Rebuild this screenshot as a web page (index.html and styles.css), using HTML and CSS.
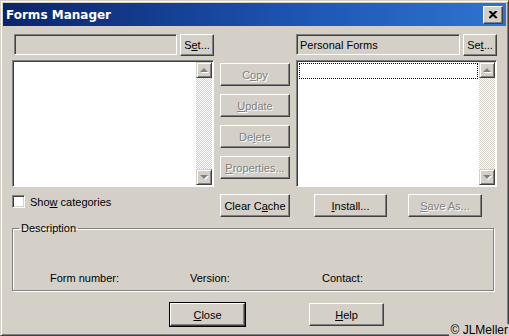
FILE: index.html
```html
<!DOCTYPE html>
<html lang="en">
<head>
    <meta charset="UTF-8">
    <title>Forms Manager</title>
    <link rel="stylesheet" href="styles.css">
</head>
<body>
    <div class="window">
        <div class="titlebar">
            <span class="title">Forms Manager</span>
            <button class="close-btn" aria-label="Close">
                <svg width="9" height="8" viewBox="0 0 9 8">
                    <path d="M1 0 L8 7 M8 0 L1 7 M0 0 L7 7 M7 0 L0 7" stroke="#000" stroke-width="1.4" fill="none"/>
                </svg>
            </button>
        </div>

        <div class="content">
            <div class="panels">
                <!-- left library -->
                <div class="picker picker-left">
                    <div class="field"></div>
                    <button class="btn set-btn">S<u>e</u>t...</button>
                </div>
                <div class="spacer"></div>
                <div class="picker">
                    <div class="field">Personal Forms</div>
                    <button class="btn set-btn">Se<u>t</u>...</button>
                </div>

                <div class="list">
                    <div class="list-body"></div>
                    <div class="scrollbar">
                        <div class="arrow up"></div>
                        <div class="arrow down"></div>
                    </div>
                </div>
                <div class="actions">
                    <button class="btn wide disabled">C<u>o</u>py</button>
                    <button class="btn wide disabled"><u>U</u>pdate</button>
                    <button class="btn wide disabled">De<u>l</u>ete</button>
                    <button class="btn wide disabled"><u>P</u>roperties...</button>
                </div>
                <div class="list">
                    <div class="list-body">
                        <div class="focus-row"></div>
                    </div>
                    <div class="scrollbar">
                        <div class="arrow up"></div>
                        <div class="arrow down"></div>
                    </div>
                </div>

                <label class="check">
                    <span class="box"></span>
                    <span>Sho<u>w</u> categories</span>
                </label>
                <button class="btn wide">Clear C<u>a</u>che</button>
                <div class="right-actions">
                    <button class="btn install-btn"><u>I</u>nstall...</button>
                    <button class="btn save-btn disabled"><u>S</u>ave As...</button>
                </div>
            </div>

            <fieldset class="group">
                <legend>Description</legend>
                <div class="meta">
                    <span class="meta-number">Form number:</span>
                    <span class="meta-version">Version:</span>
                    <span class="meta-contact">Contact:</span>
                </div>
            </fieldset>

            <div class="footer">
                <button class="btn footer-btn default"><u>C</u>lose</button>
                <button class="btn footer-btn"><u>H</u>elp</button>
            </div>
        </div>

        <div class="credit">&copy; JLMeller</div>
    </div>
</body>
</html>
```

FILE: styles.css
```css
body {
    margin: 0;
    background: #d4d0c8;
    font-family: 'Liberation Sans', Arial, sans-serif;
    font-size: 11px;
    color: #000;
    overflow: hidden;
}

.window {
    position: relative;
    width: 509px;
    height: 336px;
    box-sizing: border-box;
    padding: 2px;
    background: #d4d0c8;
    border: 1px solid;
    border-color: #d4d0c8 #404040 #404040 #d4d0c8;
    box-shadow: inset 1px 1px #fff, inset -1px -1px #808080;
}

.titlebar {
    height: 23px;
    display: flex;
    align-items: center;
    justify-content: space-between;
    padding: 0 3px 0 3px;
    background: linear-gradient(to right, #0a246a, #1e56b4 60%, #2f74d0);
}

.title {
    color: #fff;
    font-family: 'DejaVu Sans', sans-serif;
    font-weight: bold;
    font-size: 12px;
}

.close-btn {
    width: 20px;
    height: 18px;
    padding: 0;
    display: flex;
    align-items: center;
    justify-content: center;
    background: #d4d0c8;
    border: 1px solid;
    border-color: #fff #404040 #404040 #fff;
    box-shadow: inset -1px -1px #808080;
}

.content {
    padding: 8px 0 0 9px;
}

.panels {
    display: grid;
    grid-template-columns: 202px 70px 201px;
    column-gap: 6px;
    align-items: start;
}

/* classic 3d button */
.btn {
    height: 23px;
    padding: 0;
    font-family: inherit;
    font-size: 11px;
    color: #000;
    background: #d4d0c8;
    border: 1px solid;
    border-color: #fff #404040 #404040 #fff;
    box-shadow: inset -1px -1px #808080;
    box-sizing: border-box;
}

.btn.disabled {
    color: #808080;
    text-shadow: 1px 1px #fff;
}

.btn.wide {
    width: 70px;
}

.picker {
    display: flex;
    gap: 3px;
}

.picker-left {
    padding-left: 2px;
}

.field {
    flex: 1;
    height: 21px;
    box-sizing: border-box;
    padding: 3px 3px;
    border: 1px solid;
    border-color: #808080 #fff #fff #808080;
    box-shadow: inset 1px 1px #404040;
    line-height: 14px;
}

.set-btn {
    width: 34px;
    height: 22px;
}

.list {
    margin-top: 4px;
    display: flex;
    border: 1px solid;
    border-color: #808080 #fff #fff #808080;
    box-shadow: inset 1px 1px #404040;
    padding: 1px 1px 1px 2px;
    background: #fff;
    box-sizing: border-box;
    height: 127px;
}

.list-body {
    flex: 1;
    padding-top: 1px;
}

.focus-row {
    height: 14px;
    border: 1px dotted #000;
    margin-right: 1px;
}

.scrollbar {
    width: 16px;
    display: flex;
    flex-direction: column;
    justify-content: space-between;
    background: repeating-conic-gradient(#d4d0c8 0 25%, #fff 0 50%) 0 0 / 2px 2px;
}

.arrow {
    height: 16px;
    box-sizing: border-box;
    background: #d4d0c8;
    border: 1px solid;
    border-color: #d4d0c8 #404040 #404040 #d4d0c8;
    box-shadow: inset 1px 1px #fff, inset -1px -1px #808080;
    display: flex;
    align-items: center;
    justify-content: center;
}

.arrow::after {
    content: '';
    border-left: 4px solid transparent;
    border-right: 4px solid transparent;
    filter: drop-shadow(1px 1px 0 #fff);
}

.arrow.up::after {
    border-bottom: 4px solid #808080;
}

.arrow.down::after {
    border-top: 4px solid #808080;
}

.actions {
    margin-top: 7px;
    display: flex;
    flex-direction: column;
    gap: 8px;
}

.check {
    margin-top: 8px;
    display: flex;
    align-items: center;
    gap: 5px;
    height: 13px;
}

.box {
    width: 13px;
    height: 13px;
    box-sizing: border-box;
    background: #fff;
    border: 1px solid;
    border-color: #808080 #fff #fff #808080;
    box-shadow: inset 1px 1px #404040, inset -1px -1px #d4d0c8;
}

.panels > .btn.wide {
    margin-top: 7px;
}

.right-actions {
    margin-top: 7px;
    display: flex;
    gap: 21px;
    padding-left: 18px;
}

.install-btn {
    width: 73px;
}

.save-btn {
    width: 74px;
}

.group {
    margin: 5px 0 0 0;
    width: 482px;
    height: 69px;
    box-sizing: border-box;
    padding: 0;
    border: 1px solid #808080;
    box-shadow: inset 1px 1px #fff, 1px 1px #fff;
}

.group legend {
    margin-left: 6px;
    padding: 0 2px;
    line-height: 13px;
}

.meta {
    display: flex;
    padding: 37px 0 0 37px;
}

.meta-number {
    width: 140px;
}

.meta-version {
    width: 132px;
}

.footer {
    margin-top: 12px;
    display: flex;
    gap: 64px;
    padding-left: 158px;
}

.footer-btn {
    width: 75px;
}

.footer-btn.default {
    outline: 1px solid #000;
    outline-offset: 0;
}

.credit {
    position: absolute;
    right: -1px;
    bottom: -1px;
    padding: 0 1px;
    background: #d4d0c8;
    font-size: 12px;
    line-height: 12px;
}
```
